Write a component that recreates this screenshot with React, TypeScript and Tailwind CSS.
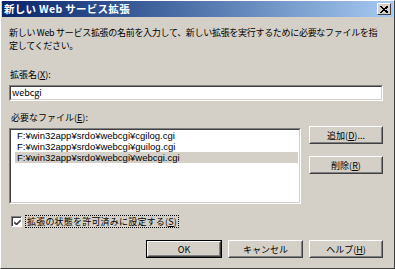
import React from "react";

const FONT = { fontFamily: '"Noto Sans CJK JP", "Noto Sans", sans-serif' };
const LIST_FONT = { fontFamily: '"Liberation Sans", "Noto Sans CJK JP", sans-serif' };

function Raised({ children, className = "", def = false }: { children: React.ReactNode; className?: string; def?: boolean }) {
  const inner = (
    <div className="h-full w-full border-t border-l border-b border-r border-t-white border-l-white border-b-[#404040] border-r-[#404040]">
      <div className="h-full w-full border-t border-l border-b border-r border-t-[#d4d0c8] border-l-[#d4d0c8] border-b-[#808080] border-r-[#808080] flex items-center justify-center text-[9px] leading-none text-black">
        {children}
      </div>
    </div>
  );
  if (def) {
    return <div className={`border border-black ${className}`}>{inner}</div>;
  }
  return <div className={className}>{inner}</div>;
}

function Sunken({ children, className = "" }: { children: React.ReactNode; className?: string }) {
  return (
    <div className={`border-t border-l border-b border-r border-t-[#808080] border-l-[#808080] border-b-white border-r-white ${className}`}>
      <div className="h-full w-full border-t border-l border-b border-r border-t-[#404040] border-l-[#404040] border-b-[#d4d0c8] border-r-[#d4d0c8] bg-white">
        {children}
      </div>
    </div>
  );
}

export default function App() {
  const files = [
    "F:¥win32app¥srdo¥webcgi¥cgilog.cgi",
    "F:¥win32app¥srdo¥webcgi¥guilog.cgi",
    "F:¥win32app¥srdo¥webcgi¥webcgi.cgi",
  ];
  return (
    <div
      className="w-[395px] h-[269px] bg-[#d4d0c8] border-t border-l border-b border-r border-t-white border-l-white border-b-[#404040] border-r-[#404040] px-[1px] overflow-hidden text-black"
      style={FONT}
    >
      {/* title bar */}
      <div className="h-[16px] flex items-center justify-between bg-gradient-to-r from-[#0a246a] to-[#a6caf0] pl-[2px] pr-[2px]">
        <span className="text-white font-bold text-[10.5px] leading-none whitespace-nowrap tracking-[0.3px]">新しい Web サービス拡張</span>
        <div className="w-[14px] h-[12px] border-t border-l border-b border-r border-t-white border-l-white border-b-[#404040] border-r-[#404040] bg-[#d4d0c8] flex items-center justify-center">
          <svg width="8" height="7" viewBox="0 0 8 7">
            <path d="M0.5 0.5 L7 6.5 M1.5 0.5 L8 6.5 M7 0.5 L0.5 6.5 M8 0.5 L1.5 6.5" stroke="black" strokeWidth="1" shapeRendering="crispEdges" />
          </svg>
        </div>
      </div>

      <div className="pl-[7px] pr-[10px]">
        <div className="mt-[9px] text-[9px] leading-[13px] whitespace-nowrap tracking-[-0.3px]">
          <div>新しい Web サービス拡張の名前を入力して、新しい拡張を実行するために必要なファイルを指</div>
          <div>定してください。</div>
        </div>

        <div className="mt-[16px] text-[9px] leading-[13px] pl-[1px]">
          拡張名(<span className="underline">X</span>):
        </div>
        <Sunken className="mt-[4px] h-[16px]">
          <div className="text-[9px] leading-[12px] pl-[1px]">webcgi</div>
        </Sunken>

        <div className="mt-[10px] text-[9px] leading-[13px] pl-[2px]">
          必要なファイル(<span className="underline">E</span>):
        </div>

        <div className="mt-[2px] flex justify-between">
          <Sunken className="mt-[2px] w-[292px] h-[76px]">
            <div className="pl-[4px] pr-[1px] pt-[0px]" style={LIST_FONT}>
              {files.map((f, i) => (
                <div
                  key={f}
                  className={`h-[11px] text-[9.5px] leading-[11px] pl-[2px] whitespace-nowrap ${i === 2 ? "bg-[#d4d0c8]" : ""}`}
                >
                  {f}
                </div>
              ))}
            </div>
          </Sunken>
          <div className="flex flex-col gap-[12px] w-[74px]">
            <Raised className="h-[18px]">
              追加(<span className="underline">D</span>)...
            </Raised>
            <Raised className="h-[18px]">
              削除(<span className="underline">R</span>)
            </Raised>
          </div>
        </div>

        <div className="mt-[11px] flex items-center pl-[2px] h-[13px]">
          <div className="w-[11px] h-[11px] border-t border-l border-b border-r border-t-[#808080] border-l-[#808080] border-b-white border-r-white">
            <div className="w-full h-full border-t border-l border-t-[#404040] border-l-[#404040] bg-white flex items-center justify-center">
              <svg width="7" height="7" viewBox="0 0 7 7">
                <path d="M0 2.5 L2.5 5 L7 0.5 M0 3.5 L2.5 6 L7 1.5" stroke="black" strokeWidth="1" fill="none" />
              </svg>
            </div>
          </div>
          <div className="ml-[3px] border border-dotted border-black px-[1px] text-[9px] leading-[11px] whitespace-nowrap tracking-[0.2px]">
            拡張の状態を許可済みに設定する(<span className="underline">S</span>)
          </div>
        </div>

        <div className="mt-[12px] flex justify-end gap-[6px]">
          <Raised className="w-[76px] h-[18px]" def>
            OK
          </Raised>
          <Raised className="w-[75px] h-[18px]">キャンセル</Raised>
          <Raised className="w-[74px] h-[18px]">
            ヘルプ(<span className="underline">H</span>)
          </Raised>
        </div>
      </div>
    </div>
  );
}
